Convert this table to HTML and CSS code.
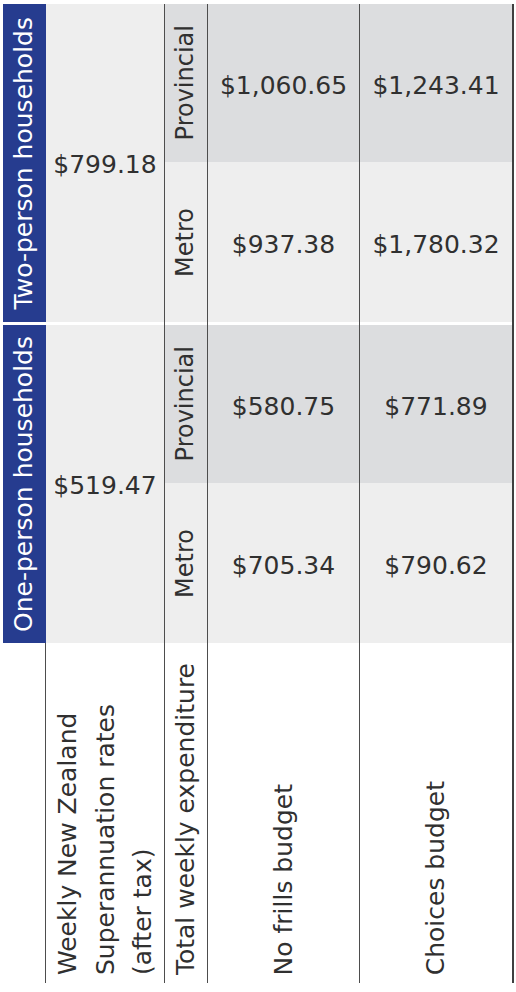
FILE: index.html
```html
<!DOCTYPE html>
<html lang="en">
<head>
<meta charset="utf-8">
<title>Weekly budgets</title>
<link rel="stylesheet" href="styles.css">
</head>
<body>
<div class="table">
  <div class="cell head"><span class="vt">Two-person households</span></div>
  <div class="cell super"><span>$799.18</span></div>
  <div class="cell sub dark"><span class="vt">Provincial</span></div>
  <div class="cell num dark">$1,060.65</div>
  <div class="cell num last dark">$1,243.41</div>
  <div class="cell sub light"><span class="vt">Metro</span></div>
  <div class="cell num light">$937.38</div>
  <div class="cell num last light">$1,780.32</div>

  <div class="cell gap first"></div>
  <div class="cell gap"></div>
  <div class="cell gap"></div>
  <div class="cell gap"></div>
  <div class="cell gap last"></div>

  <div class="cell head"><span class="vt">One-person households</span></div>
  <div class="cell super"><span>$519.47</span></div>
  <div class="cell sub dark"><span class="vt">Provincial</span></div>
  <div class="cell num dark">$580.75</div>
  <div class="cell num last dark">$771.89</div>
  <div class="cell sub light"><span class="vt">Metro</span></div>
  <div class="cell num light">$705.34</div>
  <div class="cell num last light">$790.62</div>

  <div class="cell label"></div>
  <div class="cell label"><span class="vt multi">Weekly New Zealand<br>Superannuation rates<br>(after tax)</span></div>
  <div class="cell label"><span class="vt">Total weekly expenditure</span></div>
  <div class="cell label"><span class="vt">No frills budget</span></div>
  <div class="cell label last"><span class="vt">Choices budget</span></div>
</div>
</body>
</html>
```

FILE: styles.css
```css
* {
  box-sizing: border-box;
}

html, body {
  margin: 0;
  padding: 0;
  background: #ffffff;
}

body {
  font-family: "DejaVu Sans", Verdana, sans-serif;
  color: #303030;
}

.table {
  display: grid;
  grid-template-columns: 43px 119px 43px 152px 154px;
  grid-template-rows: 158px 160px 3px 158px 160px 340px;
  margin: 4px 0 0 3px;
  width: 511px;
}

.cell {
  display: flex;
  align-items: center;
  justify-content: center;
  border-right: 1px solid #4d4d4d;
  font-size: 25px;
  line-height: 1.164;
}

.cell.last {
  border-right: 2px solid #3f3f3f;
}

.num {
  padding-top: 6px;
}

.super {
  grid-row: span 2;
  background: #eeeeee;
  padding-top: 4px;
}

.vt {
  writing-mode: vertical-rl;
  transform: rotate(180deg);
  white-space: nowrap;
  font-size: 24px;
}

.head {
  grid-row: span 2;
  background: #263c8f;
  color: #ffffff;
  border-right-color: #263c8f;
}

.head .vt {
  font-size: 25px;
}

.dark {
  background: #dcdddf;
}

.light {
  background: #eeeeee;
}

.gap {
  background: #ffffff;
}

.gap.first {
  border-right: 0;
}

.label {
  background: #ffffff;
  align-items: flex-end;
  padding-bottom: 8px;
}

.label .vt {
  font-size: 25px;
}

.vt.multi {
  line-height: 37.5px;
}
```
